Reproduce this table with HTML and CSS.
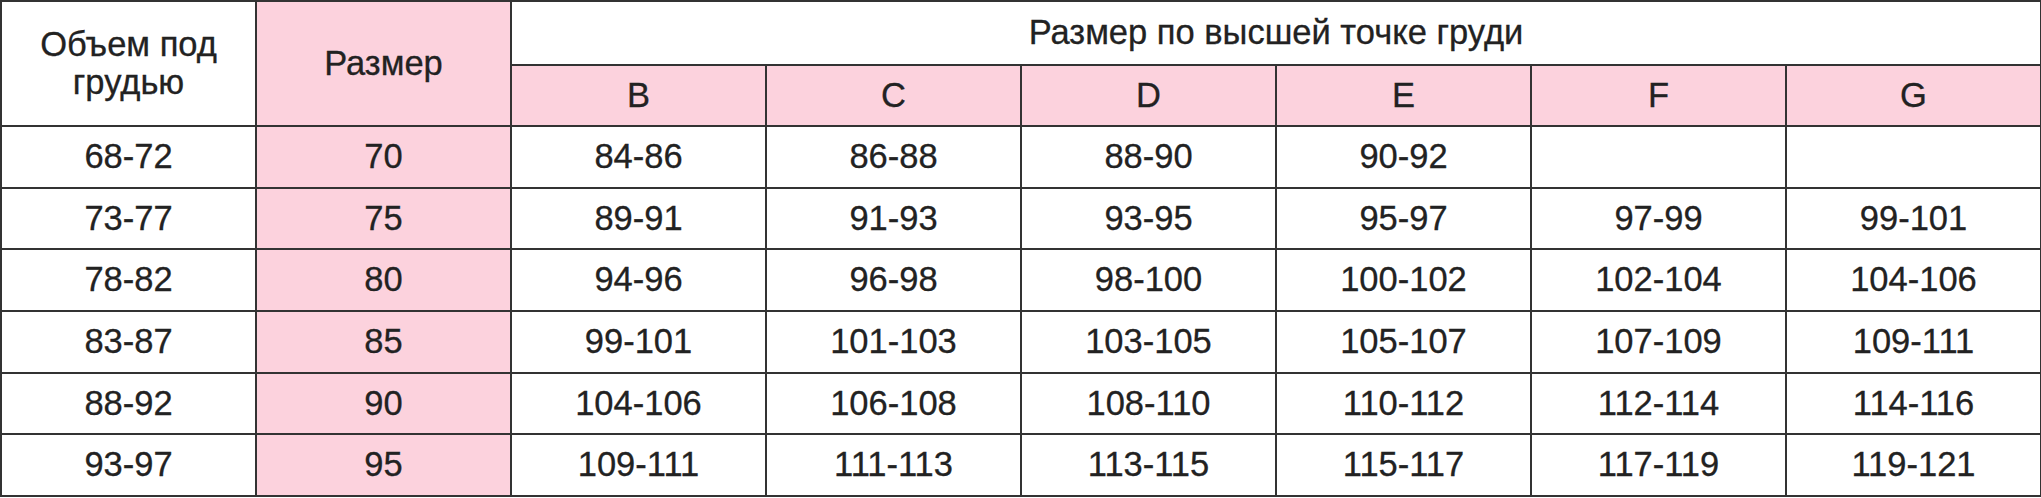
FILE: index.html
```html
<!DOCTYPE html>
<html lang="ru">
<head>
<meta charset="utf-8">
<title>Таблица размеров</title>
<link rel="stylesheet" href="styles.css">
</head>
<body>
<table class="size-table">
  <colgroup>
    <col class="c"><col class="c"><col class="c"><col class="c"><col class="c"><col class="c"><col class="c"><col class="c">
  </colgroup>
  <thead>
    <tr class="head-top">
      <th rowspan="2" class="plain">Объем под<br>грудью</th>
      <th rowspan="2" class="pink">Размер</th>
      <th colspan="6" class="plain title">Размер по высшей точке груди</th>
    </tr>
    <tr class="head-cups">
      <th class="pink">B</th>
      <th class="pink">C</th>
      <th class="pink">D</th>
      <th class="pink">E</th>
      <th class="pink">F</th>
      <th class="pink">G</th>
    </tr>
  </thead>
  <tbody>
    <tr><td>68-72</td><td class="pink">70</td><td>84-86</td><td>86-88</td><td>88-90</td><td>90-92</td><td></td><td></td></tr>
    <tr><td>73-77</td><td class="pink">75</td><td>89-91</td><td>91-93</td><td>93-95</td><td>95-97</td><td>97-99</td><td>99-101</td></tr>
    <tr><td>78-82</td><td class="pink">80</td><td>94-96</td><td>96-98</td><td>98-100</td><td>100-102</td><td>102-104</td><td>104-106</td></tr>
    <tr><td>83-87</td><td class="pink">85</td><td>99-101</td><td>101-103</td><td>103-105</td><td>105-107</td><td>107-109</td><td>109-111</td></tr>
    <tr><td>88-92</td><td class="pink">90</td><td>104-106</td><td>106-108</td><td>108-110</td><td>110-112</td><td>112-114</td><td>114-116</td></tr>
    <tr><td>93-97</td><td class="pink">95</td><td>109-111</td><td>111-113</td><td>113-115</td><td>115-117</td><td>117-119</td><td>119-121</td></tr>
  </tbody>
</table>
</body>
</html>
```
FILE: styles.css
```css
html, body {
  margin: 0;
  padding: 0;
  background: #ffffff;
}

body {
  font-family: "Liberation Sans", Arial, sans-serif;
  color: #222222;
}

.size-table {
  width: 2040px;
  table-layout: fixed;
  border-collapse: collapse;
  margin: 0;
}

.size-table col.c {
  width: 255px;
}

.size-table th,
.size-table td {
  border: 2px solid #333333;
  padding: 0;
  text-align: center;
  vertical-align: middle;
  font-size: 34.5px;
  font-weight: normal;
  line-height: 1.1;
  background: #ffffff;
  -webkit-text-stroke: 0.3px #222222;
}

.size-table .pink {
  background: #fcd2dd;
}

.head-top {
  height: 64px;
}

.head-cups {
  height: 61px;
}

.size-table tbody tr {
  height: 61.7px;
}
```
